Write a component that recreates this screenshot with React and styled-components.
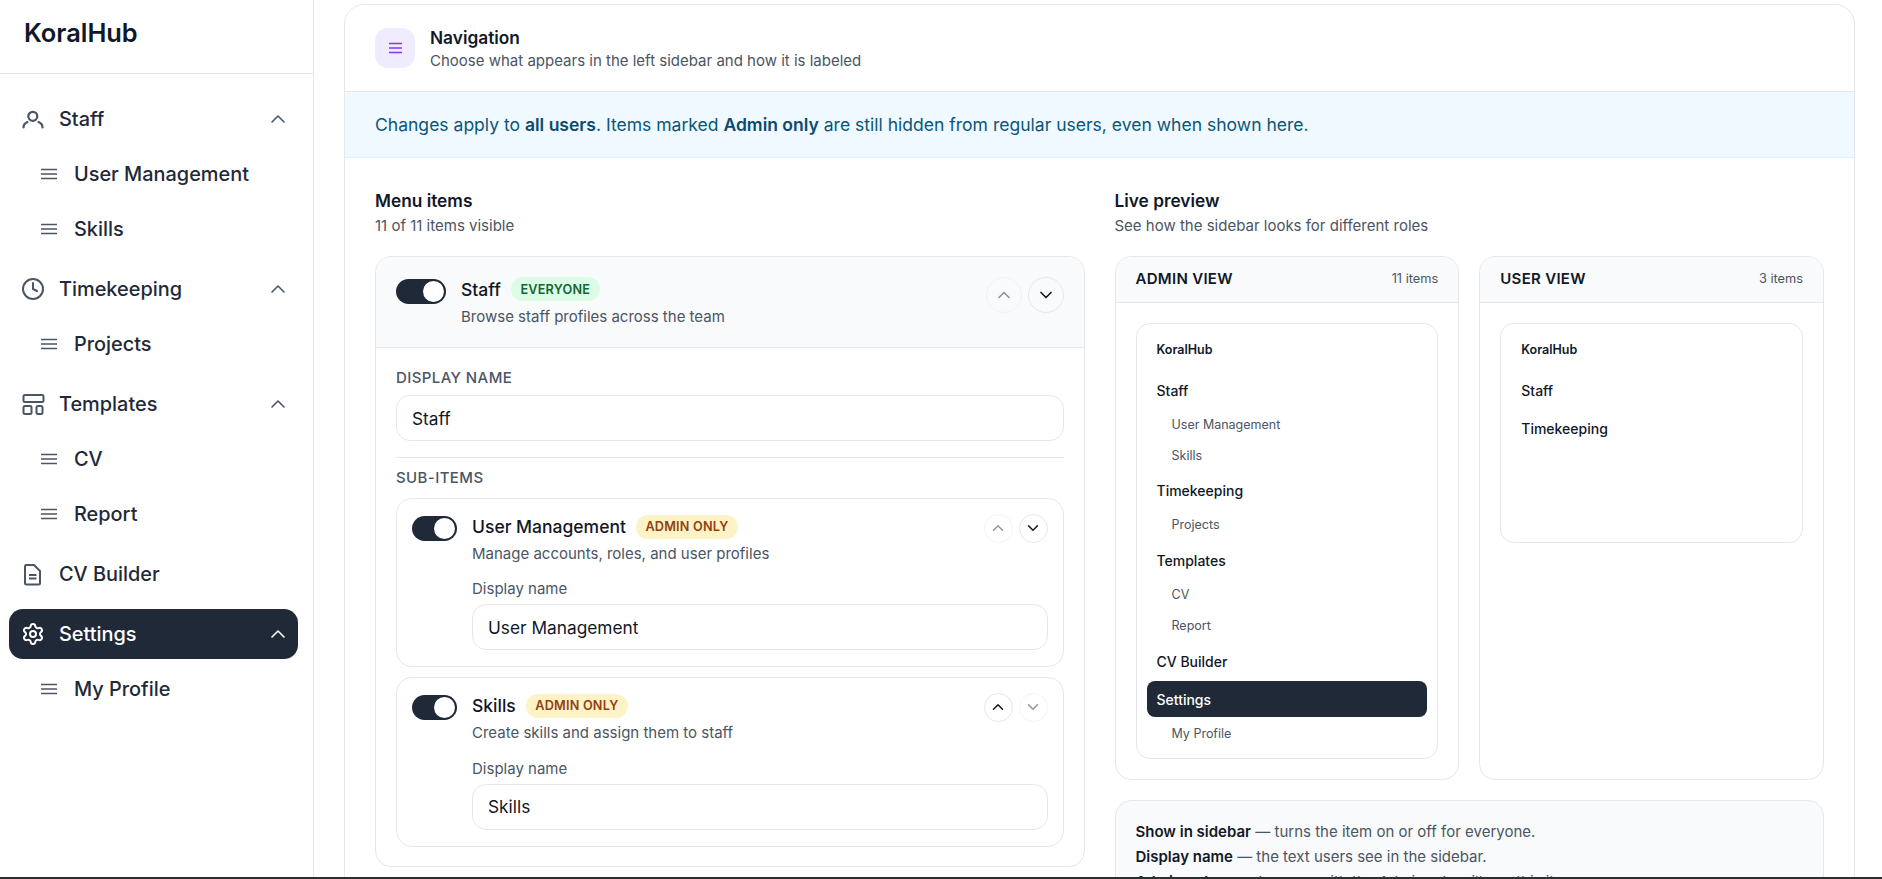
import React from 'react'
import styled, { createGlobalStyle } from 'styled-components'
import { ChevronUp, ChevronDown, Clock, Settings } from 'lucide-react'

const Global = createGlobalStyle`
  html, body { margin: 0; height: 100%; overflow: hidden; background: #fff; }
  body { font-family: Inter, "Liberation Sans", sans-serif; color: #111827; }
  * { box-sizing: border-box; }
`

const Shell = styled.div`
  display: flex;
  height: 877px;
  overflow: hidden;
`
const BottomEdge = styled.div`
  height: 2px;
  background: #2b2f33;
`

const Sidebar = styled.aside`
  width: 314px;
  flex: none;
  border-right: 1px solid #e5e7eb;
  background: #fff;
`
const Brand = styled.div`
  height: 74px;
  padding: 18px 24px 0;
  border-bottom: 1px solid #e5e7eb;
  font-size: 25.4px;
  line-height: 30px;
  font-weight: 600;
  color: #111827;
`
const SideNav = styled.nav`
  display: flex;
  flex-direction: column;
  padding: 20px 15.5px 0 9px;
`
const TopItem = styled.div`
  display: flex;
  align-items: center;
  height: 50px;
  padding: 0 7.5px 0 11.5px;
  margin-bottom: ${p => p.$gap || 0}px;
  border-radius: 14px;
  font-size: 19.9px;
  font-weight: 500;
  color: ${p => (p.$active ? '#fff' : '#1f2937')};
  background: ${p => (p.$active ? '#1f2937' : 'transparent')};
  svg { flex: none; color: ${p => (p.$active ? '#fff' : '#4b5563')}; }
`
const TopLabel = styled.span`
  flex: 1;
  margin-left: 14.5px;
`
const SubList = styled.div`
  padding-top: 2.5px;
  margin-bottom: ${p => p.$gap ?? 7.5}px;
`
const SubItem = styled.div`
  display: flex;
  align-items: center;
  height: 55px;
  padding-left: 32px;
  font-size: 19.9px;
  font-weight: 500;
  color: #1f2937;
  svg { flex: none; color: #4b5563; }
`
const SubLabel = styled.span`
  margin-left: 17px;
`

const Main = styled.main`
  flex: 1;
  min-width: 0;
  padding: 4px 27px 0 30px;
`
const Card = styled.section`
  border: 1px solid #e5e7eb;
  border-radius: 20px;
  background: #fff;
`
const CardHead = styled.header`
  display: flex;
  align-items: center;
  gap: 15px;
  height: 87px;
  padding: 0 30px;
  border-bottom: 1px solid #e5e7eb;
`
const HeadIcon = styled.div`
  width: 40px;
  height: 40px;
  border-radius: 13px;
  background: #f0ebff;
  color: #7c3aed;
  display: flex;
  align-items: center;
  justify-content: center;
`
const HeadText = styled.div`
  margin-top: 1px;
`
const HeadTitle = styled.div`
  font-size: 17.3px;
  line-height: 24px;
  font-weight: 600;
  color: #111827;
`
const Muted = styled.div`
  font-size: 15px;
  line-height: 22px;
  color: #4b5563;
`
const Notice = styled.div`
  height: 66px;
  padding: 0 30px;
  display: flex;
  align-items: center;
  background: #f0f9ff;
  border-bottom: 1px solid #e0f2fe;
  color: #0b5578;
  font-size: 17.55px;
  white-space: pre;
  strong { font-weight: 600; color: #0c4a6e; }
`
const Columns = styled.div`
  display: grid;
  grid-template-columns: 1fr 1fr;
  gap: 30px;
  padding: 31px 30px 0;
`
const SectionTitle = styled.div`
  font-size: 17.3px;
  line-height: 24px;
  font-weight: 600;
  margin-bottom: 1px;
  color: #111827;
`
const SectionSub = styled(Muted)`
  margin-bottom: 18px;
  line-height: 24px;
`
const ItemCard = styled.div`
  border: 1px solid #e5e7eb;
  border-radius: 16px;
  overflow: hidden;
`
const ItemHead = styled.div`
  display: flex;
  align-items: flex-start;
  height: 91px;
  padding: 20px 20px 0;
  background: #f9fafb;
  border-bottom: 1px solid #e5e7eb;
`
const Toggle = styled.div`
  width: ${p => (p.$small ? 45 : 50)}px;
  height: 25px;
  flex: none;
  margin-top: 1.5px;
  margin-right: 15px;
  border-radius: 13px;
  background: #1f2937;
  position: relative;
  &::after {
    content: '';
    position: absolute;
    top: 2px;
    right: 2px;
    width: 21px;
    height: 21px;
    border-radius: 50%;
    background: #fff;
  }
`
const ItemText = styled.div`
  flex: 1;
  min-width: 0;
`
const ItemTitleRow = styled.div`
  display: flex;
  align-items: center;
  gap: 10px;
  height: 24px;
  font-size: 17.5px;
  font-weight: 500;
  color: #111827;
`
const Badge = styled.span`
  height: 24px;
  padding: 0 9.5px;
  display: inline-flex;
  align-items: center;
  border-radius: 12px;
  font-size: 12.7px;
  font-weight: 600;
  letter-spacing: 0.2px;
  background: ${p => (p.$tone === 'green' ? '#dcfce7' : '#fef3c7')};
  color: ${p => (p.$tone === 'green' ? '#166534' : '#92400e')};
`
const ItemDesc = styled(Muted)`
  margin-top: ${p => p.$top}px;
`
const Arrows = styled.div`
  display: flex;
  gap: 6px;
  margin-top: ${p => (p.$small ? -1 : 0)}px;
`
const ArrowBtn = styled.div`
  width: ${p => (p.$small ? 29 : 36)}px;
  height: ${p => (p.$small ? 29 : 36)}px;
  border-radius: 50%;
  border: 1px solid #e5e7eb;
  display: flex;
  align-items: center;
  justify-content: center;
  color: #111827;
  opacity: ${p => (p.$off ? 0.45 : 1)};
`
const ItemBody = styled.div`
  padding: 20px 20px 19px;
`
const CapsLabel = styled.div`
  font-size: 15px;
  line-height: 20px;
  font-weight: 500;
  letter-spacing: 0.4px;
  color: #4b5563;
`
const TextField = styled.div`
  height: 46px;
  margin-top: ${p => p.$top || 0}px;
  padding: 0 15px;
  display: flex;
  align-items: center;
  border: 1px solid #e5e7eb;
  border-radius: 14px;
  background: #fff;
  font-size: 17.3px;
  color: #111827;
`
const Rule = styled.div`
  height: 1px;
  margin: 16px 0 10px;
  background: #e5e7eb;
`
const SubCard = styled.div`
  border: 1px solid #e5e7eb;
  border-radius: 16px;
  padding: 16px 15px 16px;
  margin-top: 9.6px;
`
const SubHead = styled.div`
  display: flex;
  align-items: flex-start;
`
const SubFields = styled.div`
  margin-left: 60px;
  margin-top: 13.7px;
`
const FieldCaption = styled.div`
  font-size: 15px;
  line-height: 22px;
  color: #4b5563;
`
const PreviewGrid = styled.div`
  display: grid;
  grid-template-columns: 1fr 1fr;
  gap: 20px;
`
const PreviewCard = styled.div`
  height: 523.5px;
  border: 1px solid #e5e7eb;
  border-radius: 16px;
  overflow: hidden;
`
const PreviewHead = styled.div`
  height: 46px;
  padding: 0 20px 2px;
  display: flex;
  align-items: center;
  justify-content: space-between;
  background: #f9fafb;
  border-bottom: 1px solid #e5e7eb;
  font-size: 15px;
  font-weight: 600;
  letter-spacing: 0.3px;
  color: #111827;
`
const PreviewCount = styled.span`
  font-size: 12.8px;
  font-weight: 400;
  letter-spacing: 0;
  color: #4b5563;
`
const MiniBar = styled.div`
  margin: 20px 20px 0;
  height: ${p => p.$height}px;
  padding: 13px 10px 0;
  border: 1px solid #e5e7eb;
  border-radius: 14px;
`
const MiniBrand = styled.div`
  height: 26px;
  margin-bottom: 9px;
  padding-left: 10px;
  font-size: 12.5px;
  line-height: 26px;
  font-weight: 600;
  color: #111827;
`
const MiniTop = styled.div`
  height: 36px;
  margin-bottom: 2px;
  padding-left: 10px;
  display: flex;
  align-items: center;
  border-radius: 8px;
  font-size: 14px;
  font-weight: 500;
  color: ${p => (p.$active ? '#fff' : '#111827')};
  background: ${p => (p.$active ? '#1f2937' : 'transparent')};
`
const MiniSubs = styled.div`
  margin-top: -1.5px;
  margin-bottom: 2.2px;
`
const MiniSub = styled.div`
  height: 31px;
  padding-left: 25px;
  display: flex;
  align-items: center;
  font-size: 12.5px;
  color: #4b5563;
`
const HelpBox = styled.div`
  margin-top: 20px;
  padding: 18px 20px;
  border: 1px solid #e5e7eb;
  border-radius: 16px;
  background: #f9fafb;
  font-size: 15px;
  line-height: 25px;
  color: #4b5563;
  strong { font-weight: 600; color: #111827; }
`

const BarsIcon = ({ w = 16 }) => (
  <svg width={w} height="14" viewBox="0 0 16 14" preserveAspectRatio="none" fill="none" stroke="currentColor" strokeWidth="1.6">
    <path d="M0 2.5H16M0 7H16M0 11.5H16" />
  </svg>
)
const PersonIcon = () => (
  <svg width="24" height="24" viewBox="0 0 24 24" fill="none" stroke="currentColor" strokeWidth="2.2" strokeLinecap="round">
    <circle cx="11.8" cy="9.3" r="4.5" />
    <path d="M2.5 20.5c0-2.5 1.2-4.2 4-5.4M21.5 20.5c0-2.5-1.2-4.2-4-5.4" />
  </svg>
)
const TemplateIcon = () => (
  <svg width="24" height="24" viewBox="0 0 24 24" fill="none" stroke="currentColor" strokeWidth="2">
    <rect x="2.5" y="3" width="20" height="7" rx="1.5" />
    <rect x="2.5" y="14" width="8" height="8" rx="1.5" />
    <rect x="15.5" y="14" width="6" height="8" rx="1.5" />
  </svg>
)
const DocIcon = () => (
  <svg width="24" height="24" viewBox="0 0 24 24" fill="none" stroke="currentColor" strokeWidth="2" strokeLinejoin="round">
    <path d="M5 3h8l6 6v12a1.5 1.5 0 0 1-1.5 1.5h-12A1.5 1.5 0 0 1 4 21V4.5A1.5 1.5 0 0 1 5 3z" />
    <path d="M8 13h7.5M8 16.5h7.5" />
  </svg>
)
const Chevron = () => <ChevronUp size={24} strokeWidth={1.6} />

const Arrow = ({ dir, off, small }) => (
  <ArrowBtn $off={off} $small={small}>
    {dir === 'up' ? <ChevronUp size={small ? 18 : 20} strokeWidth={2} /> : <ChevronDown size={small ? 18 : 20} strokeWidth={2} />}
  </ArrowBtn>
)

const SubEntry = ({ name, desc, first, last }) => (
  <SubCard>
    <SubHead>
      <Toggle $small />
      <ItemText>
        <ItemTitleRow>{name}<Badge>ADMIN ONLY</Badge></ItemTitleRow>
        <ItemDesc $top={4}>{desc}</ItemDesc>
      </ItemText>
      <Arrows $small>
        <Arrow dir="up" off={first} small />
        <Arrow dir="down" off={last} small />
      </Arrows>
    </SubHead>
    <SubFields>
      <FieldCaption>Display name</FieldCaption>
      <TextField $top={4}>{name}</TextField>
    </SubFields>
  </SubCard>
)

const SideSub = ({ label }) => (
  <SubItem><BarsIcon /><SubLabel>{label}</SubLabel></SubItem>
)

export default function App() {
  return (
    <>
      <Global />
      <Shell>
        <Sidebar>
          <Brand>KoralHub</Brand>
          <SideNav>
            <TopItem><PersonIcon /><TopLabel>Staff</TopLabel><Chevron /></TopItem>
            <SubList>
              <SideSub label="User Management" />
              <SideSub label="Skills" />
            </SubList>
            <TopItem><Clock size={24} strokeWidth={2} /><TopLabel>Timekeeping</TopLabel><Chevron /></TopItem>
            <SubList>
              <SideSub label="Projects" />
            </SubList>
            <TopItem><TemplateIcon /><TopLabel>Templates</TopLabel><Chevron /></TopItem>
            <SubList>
              <SideSub label="CV" />
              <SideSub label="Report" />
            </SubList>
            <TopItem $gap={10}><DocIcon /><TopLabel>CV Builder</TopLabel></TopItem>
            <TopItem $active><Settings size={24} strokeWidth={2} /><TopLabel>Settings</TopLabel><Chevron /></TopItem>
            <SubList $gap={0}>
              <SideSub label="My Profile" />
            </SubList>
          </SideNav>
        </Sidebar>
        <Main>
          <Card>
            <CardHead>
              <HeadIcon><BarsIcon w={13} /></HeadIcon>
              <HeadText>
                <HeadTitle>Navigation</HeadTitle>
                <Muted>Choose what appears in the left sidebar and how it is labeled</Muted>
              </HeadText>
            </CardHead>
            <Notice>Changes apply to <strong>all users</strong>. Items marked <strong>Admin only</strong> are still hidden from regular users, even when shown here.</Notice>
            <Columns>
              <div>
                <SectionTitle>Menu items</SectionTitle>
                <SectionSub>11 of 11 items visible</SectionSub>
                <ItemCard>
                  <ItemHead>
                    <Toggle />
                    <ItemText>
                      <ItemTitleRow>Staff<Badge $tone="green">EVERYONE</Badge></ItemTitleRow>
                      <ItemDesc $top={5}>Browse staff profiles across the team</ItemDesc>
                    </ItemText>
                    <Arrows>
                      <Arrow dir="up" off />
                      <Arrow dir="down" />
                    </Arrows>
                  </ItemHead>
                  <ItemBody>
                    <CapsLabel>DISPLAY NAME</CapsLabel>
                    <TextField $top={7}>Staff</TextField>
                    <Rule />
                    <CapsLabel>SUB-ITEMS</CapsLabel>
                    <SubEntry name="User Management" desc="Manage accounts, roles, and user profiles" first />
                    <SubEntry name="Skills" desc="Create skills and assign them to staff" last />
                  </ItemBody>
                </ItemCard>
              </div>
              <div>
                <SectionTitle>Live preview</SectionTitle>
                <SectionSub>See how the sidebar looks for different roles</SectionSub>
                <PreviewGrid>
                  <PreviewCard>
                    <PreviewHead>ADMIN VIEW<PreviewCount>11 items</PreviewCount></PreviewHead>
                    <MiniBar $height={436}>
                      <MiniBrand>KoralHub</MiniBrand>
                      <MiniTop>Staff</MiniTop>
                      <MiniSubs>
                        <MiniSub>User Management</MiniSub>
                        <MiniSub>Skills</MiniSub>
                      </MiniSubs>
                      <MiniTop>Timekeeping</MiniTop>
                      <MiniSubs>
                        <MiniSub>Projects</MiniSub>
                      </MiniSubs>
                      <MiniTop>Templates</MiniTop>
                      <MiniSubs>
                        <MiniSub>CV</MiniSub>
                        <MiniSub>Report</MiniSub>
                      </MiniSubs>
                      <MiniTop>CV Builder</MiniTop>
                      <MiniTop $active>Settings</MiniTop>
                      <MiniSubs>
                        <MiniSub>My Profile</MiniSub>
                      </MiniSubs>
                    </MiniBar>
                  </PreviewCard>
                  <PreviewCard>
                    <PreviewHead>USER VIEW<PreviewCount>3 items</PreviewCount></PreviewHead>
                    <MiniBar $height={220}>
                      <MiniBrand>KoralHub</MiniBrand>
                      <MiniTop>Staff</MiniTop>
                      <MiniTop>Timekeeping</MiniTop>
                    </MiniBar>
                  </PreviewCard>
                </PreviewGrid>
                <HelpBox>
                  <div><strong>Show in sidebar</strong> — turns the item on or off for everyone.</div>
                  <div><strong>Display name</strong> — the text users see in the sidebar.</div>
                  <div><strong>Admin only</strong> — only users with the Admin role will see this item.</div>
                </HelpBox>
              </div>
            </Columns>
          </Card>
        </Main>
      </Shell>
      <BottomEdge />
    </>
  )
}
